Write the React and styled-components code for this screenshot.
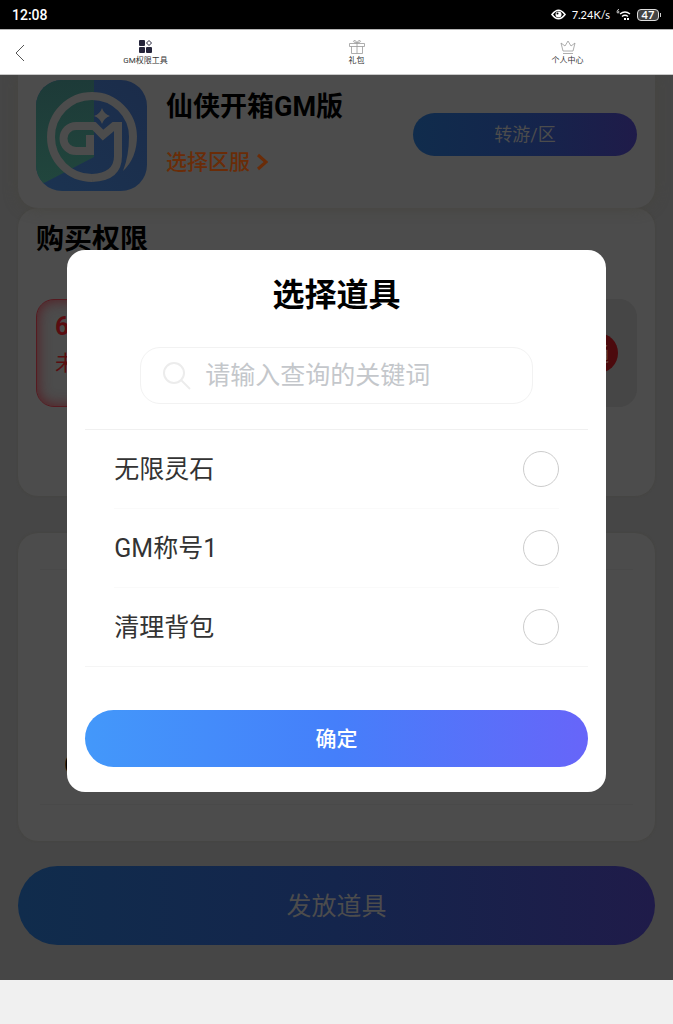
import React, { useState } from "react";
import styled, { createGlobalStyle } from "styled-components";

const GlobalStyle = createGlobalStyle`
  * {
    box-sizing: border-box;
  }
  body {
    margin: 0;
    background: #f0f0f0;
    font-family: Roboto, "Noto Sans CJK SC", sans-serif;
  }
  h1, h2, p {
    margin: 0;
  }
  button, input {
    font-family: inherit;
  }
`;

const StatusBar = styled.header`
  display: flex;
  align-items: center;
  justify-content: space-between;
  height: 29px;
  padding: 0 12px;
  background: #000;
  color: #fff;
  font-size: 14px;
  font-weight: 500;
`;

const StatusIcons = styled.div`
  display: flex;
  align-items: center;
  gap: 6px;
  font-size: 11px;
  font-family: Lato, sans-serif;
  font-weight: 400;
  svg {
    display: block;
  }
`;

const Battery = styled.span`
  display: flex;
  align-items: center;
  justify-content: center;
  width: 22px;
  height: 12px;
  border: 1px solid #ddd;
  border-radius: 4px;
  background: #444;
  font-size: 11px;
  font-weight: 700;
`;

const BatteryWrap = styled.span`
  display: flex;
  align-items: center;
  &::after {
    content: "";
    width: 1px;
    height: 4px;
    margin-left: 1px;
    background: #ccc;
  }
`;

const NavBar = styled.nav`
  display: flex;
  align-items: center;
  height: 46px;
  padding-top: 2px;
  background: #fff;
  border-top: 1px solid #b5b5b5;
  border-bottom: 1px solid #c9c9c9;
`;

const BackButton = styled.button`
  display: flex;
  width: 40px;
  padding: 0 0 0 14px;
  border: 0;
  background: none;
`;

const Tabs = styled.div`
  flex: 1;
  display: grid;
  grid-template-columns: repeat(3, 1fr);
`;

const Tab = styled.a`
  display: flex;
  flex-direction: column;
  align-items: center;
  gap: 1px;
  color: #333;
  font-size: 8px;
  line-height: 11px;
  text-decoration: none;
`;

const Stage = styled.main`
  position: relative;
  padding-bottom: 35px;
  background: #464646;
  overflow: hidden;
`;

const Panel = styled.section`
  margin: 0 18px;
  padding: 0 18px;
  border-radius: ${(props) => (props.$attached ? "0 0 20px 20px" : "20px")};
  background: #4c4c4c;
  box-shadow: 0 0 ${(props) => (props.$attached ? "14px" : "2px")} #46453f;
`;

const GamePanel = styled(Panel)`
  position: relative;
  display: flex;
  gap: 19px;
  height: 133px;
  padding-top: 5px;
`;

const GameInfo = styled.div`
  flex: 1;
  display: flex;
  flex-direction: column;
  align-items: flex-start;
  gap: 19px;
  padding-top: 9px;
`;

const GameTitle = styled.h1`
  color: #000;
  font-size: 27px;
  line-height: 36px;
  font-weight: 700;
`;

const ServerLink = styled.a`
  display: flex;
  align-items: center;
  gap: 7px;
  color: #6a2c08;
  font-size: 21px;
  line-height: 36px;
  font-weight: 500;
  text-decoration: none;
`;

const DimButton = styled.button`
  padding: 0 0 4px;
  border: 0;
  border-radius: 40px;
  background: linear-gradient(90deg, #102c4c, #14254c 50%, #1f1b49);
  color: #4c4c4c;
`;

const TransferButton = styled(DimButton)`
  width: 224px;
  height: 43px;
  margin-top: 33px;
  font-size: 18px;
`;

const PermissionPanel = styled(Panel)`
  height: 288px;
  padding-top: 12px;
`;

const PanelTitle = styled.h2`
  color: #000;
  font-size: 28px;
  line-height: 40px;
  font-weight: 700;
`;

const Permissions = styled.div`
  display: grid;
  grid-template-columns: 1fr 1fr;
  gap: 18px;
  margin-top: 39px;
`;

const Permission = styled.div`
  display: flex;
  align-items: flex-start;
  justify-content: space-between;
  height: 108px;
  padding: 9px 18px;
  border-radius: 18px;
  border: 1px solid ${(props) => (props.$active ? "#561a20" : "#464646")};
  background: ${(props) => (props.$active ? "#4c4c4c" : "#464646")};
  box-shadow: ${(props) => (props.$active ? "inset 0 0 14px #561a20" : "none")};
  color: #5a0d10;
  font-size: 21px;
  line-height: 36px;
  strong {
    display: block;
    font-size: 25px;
  }
`;

const BuyButton = styled.button`
  align-self: center;
  width: 58px;
  height: 40px;
  padding: 0;
  border: 0;
  border-radius: 20px;
  background: #4c0a0d;
  color: #6c5050;
  font-size: 20px;
`;

const ItemPanel = styled(Panel)`
  height: 308px;
  margin-top: 37px;
  padding: 36px 22px 0;
`;

const ItemField = styled.div`
  display: flex;
  align-items: center;
  height: 236px;
  padding: 156px 24px 0;
  border: solid #494949;
  border-width: 1px 0;
  color: #000;
  font-size: 25px;
`;

const SendButton = styled(DimButton)`
  display: block;
  width: calc(100% - 36px);
  height: 79px;
  margin: 25px 18px 0;
  font-size: 25px;
`;

const Overlay = styled.div`
  position: absolute;
  inset: 0;
  display: flex;
  align-items: flex-start;
  justify-content: center;
  padding-top: 175px;
`;

const Dialog = styled.form`
  width: 80%;
  padding: 18px 18px 25px;
  border-radius: 18px;
  background: #fff;
`;

const DialogTitle = styled.h2`
  color: #000;
  font-size: 32px;
  line-height: 54px;
  font-weight: 700;
  text-align: center;
`;

const SearchBox = styled.label`
  display: flex;
  align-items: center;
  gap: 13px;
  height: 57px;
  margin: 25px 55px;
  padding: 0 21px;
  border: 1px solid #f2f2f2;
  border-radius: 20px;
  svg {
    flex: none;
  }
`;

const SearchInput = styled.input`
  flex: 1;
  min-width: 0;
  padding: 0;
  border: 0;
  outline: 0;
  background: none;
  color: #333;
  font-size: 25px;
  &::placeholder {
    color: #c4c7cb;
  }
`;

const ItemList = styled.div`
  border-top: 1px solid #f0f0f0;
`;

const ItemRow = styled.label`
  display: flex;
  align-items: center;
  justify-content: space-between;
  height: 79px;
  margin: 0 29px;
  color: #333;
  font-size: 25px;
  border-bottom: 1px solid #fafafa;
  &:last-child {
    margin: 0;
    padding: 0 29px;
    border-color: #f5f5f5;
  }
  span {
    padding-bottom: 5px;
  }
`;

const Radio = styled.input`
  appearance: none;
  width: 36px;
  height: 36px;
  margin: 0;
  border: 1px solid #ccc;
  border-radius: 50%;
  &:checked {
    border: 10px solid #4a7bfa;
  }
`;

const ConfirmButton = styled.button`
  display: block;
  width: 100%;
  height: 57px;
  margin-top: 43px;
  padding: 0 0 4px;
  border: 0;
  border-radius: 29px;
  background: linear-gradient(90deg, #4398fa, #457ffa 50%, #6765f9);
  color: #fff;
  font-size: 21px;
  font-weight: 500;
`;

const Footer = styled.footer`
  height: 44px;
  background: #f0f0f0;
`;

function GameLogo() {
  return (
    <svg width="111" height="111" viewBox="0 0 111 111">
      <defs>
        <linearGradient id="logoGreen" x1="0" y1="0" x2="0" y2="1">
          <stop offset="0" stopColor="#1d3a38" />
          <stop offset="1" stopColor="#21463d" />
        </linearGradient>
        <linearGradient id="logoBlue" x1="1" y1="0" x2="0" y2="1">
          <stop offset="0" stopColor="#1b2c4a" />
          <stop offset="1" stopColor="#1b3351" />
        </linearGradient>
        <clipPath id="logoClip">
          <rect width="111" height="111" rx="26" />
        </clipPath>
      </defs>
      <g clipPath="url(#logoClip)">
        <path d="M0 0h111v111H0z" fill="url(#logoBlue)" />
        <path d="M0 0h58v77L10 102 0 106z" fill="url(#logoGreen)" />
      </g>
      <g fill="none" stroke="#4c4c4c">
        <path d="M56 98A41 41 0 1 1 97 57" strokeWidth="8" />
        <path d="M54 55V71H40a12.500 12.500 0 0 1 0-25H58L67 55 78 46H82V76Q82 97 56 98" strokeWidth="8" />
      </g>
      <g fill="#4c4c4c">
        <path d="M101 56Q101 78 87 91 93 76 93 56z" />
        <path d="M66 28q2 6 8 8-6 2-8 8-2-6-8-8 6-2 8-8z" />
      </g>
    </svg>
  );
}

const items = ["无限灵石", "GM称号1", "清理背包"];

export default function App() {
  const [keyword, setKeyword] = useState("");
  const [selected, setSelected] = useState("");

  return (
    <>
      <GlobalStyle />
      <StatusBar>
        <span>12:08</span>
        <StatusIcons>
          <svg width="15" height="11" viewBox="0 0 15 11">
            <path d="M1 5.500Q7.500-3 14 5.500 7.500 14 1 5.500z" fill="none" stroke="#fff" strokeWidth="1.600" />
            <circle cx="7.500" cy="5.500" r="3" fill="#fff" />
            <circle cx="6.500" cy="4.500" r="1" fill="#000" />
          </svg>
          <span>7.24K/s</span>
          <svg width="15" height="12" viewBox="0 0 15 12" fill="none" stroke="#fff">
            <path d="M4 5q5-4 10 0M6 7.500q3-2.500 6 0" strokeWidth="1.400" />
            <path d="M8 10h6" strokeWidth="2" strokeDasharray="2 1" />
            <path d="M3 0Q1 1 1 3a1 1 0 1 0 1-1" strokeWidth="0.800" />
          </svg>
          <BatteryWrap>
            <Battery>47</Battery>
          </BatteryWrap>
        </StatusIcons>
      </StatusBar>
      <NavBar>
        <BackButton type="button" aria-label="返回">
          <svg width="12" height="18" viewBox="0 0 12 18" fill="none" stroke="#555">
            <path d="M10 1L2 9l8 8" />
          </svg>
        </BackButton>
        <Tabs>
          <Tab href="#tools">
            <svg width="14" height="14" viewBox="0 0 14 14" fill="#24243a">
              <rect x="0" y="0" width="6" height="6" rx="1" />
              <rect x="0" y="7" width="6" height="6" rx="1" />
              <rect x="7" y="7" width="6" height="6" rx="1" />
              <path d="M10 .500L12.500 3 10 5.500 7.500 3z" fill="#fff" stroke="#24243a" />
            </svg>
            GM权限工具
          </Tab>
          <Tab href="#gifts">
            <svg width="16" height="14" viewBox="0 0 16 14" fill="none" stroke="#999">
              <path d="M.500 3.500h15v3H.500zM2.500 6.500v7h11v-7M8 3.500v10M8 3Q3 2 5 .500 7 0 8 3q1-3 3-2.500Q13 2 8 3" strokeWidth=".8" />
            </svg>
            礼包
          </Tab>
          <Tab href="#me">
            <svg width="16" height="14" viewBox="0 0 16 14" fill="none" stroke="#999">
              <path d="M3 11L1 3l4 3 3-5 3 5 4-3-2 8zM3 13.500h10" strokeWidth=".8" />
            </svg>
            个人中心
          </Tab>
        </Tabs>
      </NavBar>
      <Stage>
        <GamePanel $attached>
          <GameLogo />
          <GameInfo>
            <GameTitle>仙侠开箱GM版</GameTitle>
            <ServerLink href="#server">
              选择区服
              <svg width="11" height="18" viewBox="0 0 11 18" fill="none" stroke="#6a2c08" strokeWidth="3">
                <path d="M1 2l8 7-8 7" />
              </svg>
            </ServerLink>
          </GameInfo>
          <TransferButton type="button">转游/区</TransferButton>
        </GamePanel>
        <PermissionPanel>
          <PanelTitle>购买权限</PanelTitle>
          <Permissions>
            <Permission $active>
              <p>
                <strong>6</strong>未
              </p>
            </Permission>
            <Permission>
              <span />
              <BuyButton type="button">开通</BuyButton>
            </Permission>
          </Permissions>
        </PermissionPanel>
        <ItemPanel>
          <ItemField>GM</ItemField>
        </ItemPanel>
        <SendButton type="button">发放道具</SendButton>
        <Overlay>
          <Dialog role="dialog" aria-label="选择道具" onSubmit={(e) => e.preventDefault()}>
            <DialogTitle>选择道具</DialogTitle>
            <SearchBox>
              <svg width="30" height="30" viewBox="0 0 30 30" fill="none" stroke="#ececec" strokeWidth="2">
                <circle cx="12" cy="12" r="10" />
                <path d="M19 19l9 9" />
              </svg>
              <SearchInput
                aria-label="关键词"
                placeholder="请输入查询的关键词"
                value={keyword}
                onChange={(e) => setKeyword(e.target.value)}
              />
            </SearchBox>
            <ItemList>
              {items
                .filter((item) => item.includes(keyword))
                .map((item) => (
                  <ItemRow key={item}>
                    <span>{item}</span>
                    <Radio
                      type="radio"
                      name="item"
                      checked={selected === item}
                      onChange={() => setSelected(item)}
                    />
                  </ItemRow>
                ))}
            </ItemList>
            <ConfirmButton type="submit">确定</ConfirmButton>
          </Dialog>
        </Overlay>
      </Stage>
      <Footer />
    </>
  );
}
